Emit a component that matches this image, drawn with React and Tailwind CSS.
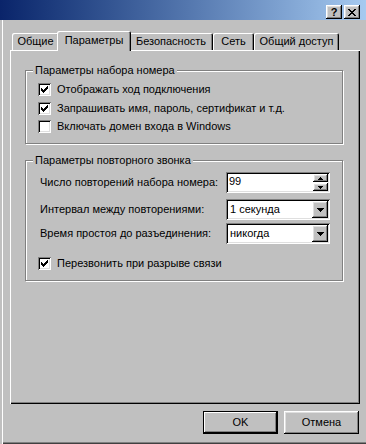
const raised =
  "shadow-[inset_-1px_-1px_0_#000,inset_1px_1px_0_#fff,inset_-2px_-2px_0_#808080,inset_2px_2px_0_#dfdfdf]";
const sunken =
  "shadow-[inset_1px_1px_0_#808080,inset_-1px_-1px_0_#fff,inset_2px_2px_0_#000,inset_-2px_-2px_0_#dfdfdf]";

function Check({ checked }) {
  return (
    <div className={`w-[13px] h-[13px] bg-white flex items-center justify-center shrink-0 ${sunken}`}>
      {checked && (
        <svg width="7" height="7" viewBox="0 0 7 7" shapeRendering="crispEdges">
          <path d="M0 2h1v3h-1zM1 3h1v3h-1zM2 4h1v3h-1zM3 3h1v3h-1zM4 2h1v3h-1zM5 1h1v3h-1zM6 0h1v3h-1z" fill="#000" />
        </svg>
      )}
    </div>
  );
}

function CheckRow({ checked, label, className = "" }) {
  return (
    <div className={`flex items-center gap-[6px] ${className}`}>
      <Check checked={checked} />
      <span>{label}</span>
    </div>
  );
}

function Arrow({ up }) {
  return (
    <svg width="5" height="3" viewBox="0 0 5 3" shapeRendering="crispEdges">
      {up ? (
        <path d="M2 0h1v1h1v1h1v1h-5v-1h1v-1h1z" fill="#000" />
      ) : (
        <path d="M0 0h5v1h-1v1h-1v1h-1v-1h-1v-1h-1z" fill="#000" />
      )}
    </svg>
  );
}

function Combo({ value }) {
  return (
    <div className={`w-[104px] h-[21px] bg-white flex items-center p-[2px] ${sunken}`}>
      <span className="flex-1 pl-[2px]">{value}</span>
      <div className={`w-[16px] h-[17px] bg-[#c0c0c0] flex items-center justify-center ${raised}`}>
        <svg width="7" height="4" viewBox="0 0 7 4" shapeRendering="crispEdges">
          <path d="M0 0h7v1h-1v1h-1v1h-1v1h-1v-1h-1v-1h-1v-1h-1z" fill="#000" />
        </svg>
      </div>
    </div>
  );
}

function Group({ title, className = "", children }) {
  return (
    <div
      className={`ml-[15px] w-[318px] border border-[#808080] shadow-[inset_1px_1px_0_#fff,1px_1px_0_#fff] ${className}`}
    >
      <div className="-mt-[7px] ml-[7px] w-fit px-[2px] bg-[#c0c0c0] leading-[13px]">{title}</div>
      {children}
    </div>
  );
}

export default function App() {
  const tabs = [
    { label: "Общие", w: "w-[47px]" },
    { label: "Параметры", w: "w-[74px]", active: true },
    { label: "Безопасность", w: "w-[84px]" },
    { label: "Сеть", w: "w-[41px]" },
    { label: "Общий доступ", w: "w-[85px]" },
  ];

  return (
    <div className="w-[366px] h-[444px] bg-[#c0c0c0] text-black text-[11px] leading-[13px] font-['Liberation_Sans',Arial,sans-serif] flex flex-col overflow-hidden shadow-[inset_2px_0_0_#c0c0c0,inset_3px_0_0_#fff,inset_0_-1px_0_#404040,inset_0_-2px_0_#808080]">
      {/* caption */}
      <div className="h-[20px] shrink-0 bg-linear-to-r from-[#0a246a] to-[#a6caf0] flex items-end justify-end gap-[2px] pr-[6px] pb-[1px]">
        <div className={`w-[16px] h-[14px] bg-[#c0c0c0] flex items-center justify-center font-bold text-[11px] leading-none ${raised}`}>
          ?
        </div>
        <div className={`w-[16px] h-[14px] bg-[#c0c0c0] flex items-center justify-center ${raised}`}>
          <svg width="8" height="7" viewBox="0 0 8 7" shapeRendering="crispEdges">
            <path d="M0 0h2v1h-2zM6 0h2v1h-2zM1 1h2v1h-2zM5 1h2v1h-2zM2 2h4v1h-4zM3 3h2v1h-2zM2 4h4v1h-4zM1 5h2v1h-2zM5 5h2v1h-2zM0 6h2v1h-2zM6 6h2v1h-2z" fill="#000" />
          </svg>
        </div>
      </div>

      {/* tabs */}
      <div className="mt-[11px] ml-[12px] h-[19px] flex items-end">
        {tabs.map((t) =>
          t.active ? (
            <div
              key={t.label}
              className={`${t.w} h-[20px] -mx-[2px] -mb-[1px] relative z-10 bg-[#c0c0c0] rounded-t-[2px] flex justify-center pt-[3px] shadow-[inset_1px_1px_0_#fff,inset_-1px_0_0_#000,inset_-2px_0_0_#808080]`}
            >
              {t.label}
            </div>
          ) : (
            <div
              key={t.label}
              className={`${t.w} h-[17px] bg-[#c0c0c0] rounded-t-[2px] flex justify-center pt-[2px] shadow-[inset_1px_1px_0_#fff,inset_-1px_0_0_#000,inset_-2px_0_0_#808080]`}
            >
              {t.label}
            </div>
          )
        )}
      </div>

      {/* panel */}
      <div className="ml-[10px] w-[350px] h-[354px] shrink-0 pt-[20px] shadow-[inset_1px_1px_0_#fff,inset_-1px_-1px_0_#000,inset_-2px_-2px_0_#808080]">
        <Group title="Параметры набора номера" className="h-[74px]">
          <div className="pl-[12px] mt-[3px]">
            <CheckRow checked label="Отображать ход подключения" className="h-[19px]" />
            <CheckRow checked label="Запрашивать имя, пароль, сертификат и т.д." className="h-[18px]" />
            <CheckRow label="Включать домен входа в Windows" className="h-[18px]" />
          </div>
        </Group>

        <Group title="Параметры повторного звонка" className="h-[121px] mt-[16px]">
          <div className="pl-[14px]">
            <div className="flex items-center h-[21px] mt-[5px]">
              <span className="w-[186px]">Число повторений набора номера:</span>
              <div className={`w-[104px] h-[21px] bg-white flex items-stretch p-[2px] ${sunken}`}>
                <span className="flex-1 pl-[1px] pt-[1px]">99</span>
                <div className="w-[15px] flex flex-col gap-[1px] py-[0px]">
                  <div className={`h-[8px] bg-[#c0c0c0] flex items-center justify-center ${raised}`}>
                    <Arrow up />
                  </div>
                  <div className={`h-[8px] bg-[#c0c0c0] flex items-center justify-center ${raised}`}>
                    <Arrow />
                  </div>
                </div>
              </div>
            </div>
            <div className="flex items-center h-[21px] mt-[6px]">
              <span className="w-[186px]">Интервал между повторениями:</span>
              <Combo value="1 секунда" />
            </div>
            <div className="flex items-center h-[21px] mt-[3px]">
              <span className="w-[186px]">Время простоя до разъединения:</span>
              <Combo value="никогда" />
            </div>
            <CheckRow checked label="Перезвонить при разрыве связи" className="h-[18px] mt-[10px] -ml-[2px]" />
          </div>
        </Group>
      </div>

      {/* buttons */}
      <div className="mt-[7px] flex justify-end gap-[6px] pr-[7px]">
        <button className="w-[75px] h-[23px] bg-[#c0c0c0] border border-black shadow-[inset_-1px_-1px_0_#000,inset_1px_1px_0_#fff,inset_-2px_-2px_0_#808080]">
          OK
        </button>
        <button className={`w-[75px] h-[23px] bg-[#c0c0c0] ${raised}`}>Отмена</button>
      </div>
    </div>
  );
}
